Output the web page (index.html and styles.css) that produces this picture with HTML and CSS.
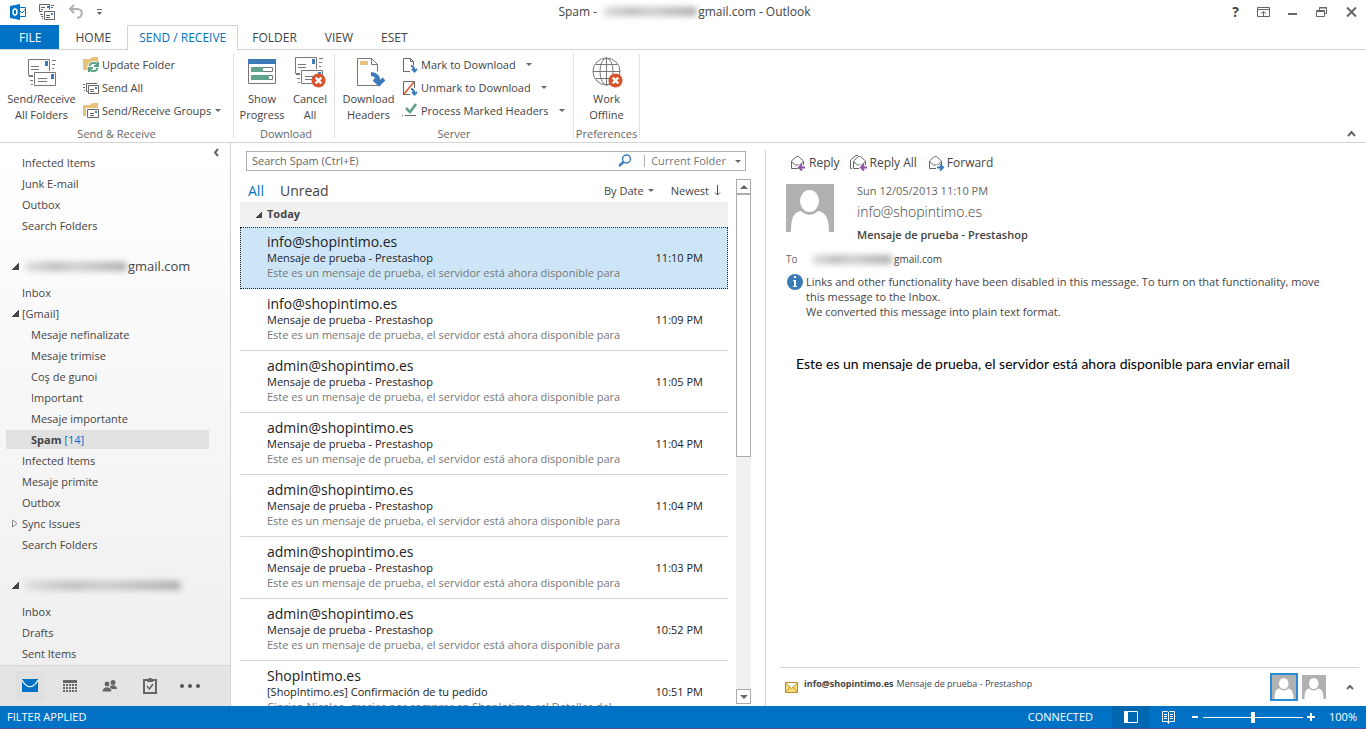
FILE: index.html
```html
<!DOCTYPE html>
<html lang="en">
<head>
    <meta charset="UTF-8">
    <meta name="viewport" content="width=device-width, initial-scale=1.0">
    <title>Spam - Outlook</title>
    <link rel="stylesheet" href="styles.css">
</head>
<body>

    <!-- Shared icons -->
    <svg class="sprite" aria-hidden="true">
        <symbol id="mails" viewBox="0 0 32 32">
            <path fill="#fff" stroke="#777" d="M2.5 3.500h21v16h-21z"/>
            <path stroke="#777" fill="none" d="M5 10.500h8M5 13.500h8M26 4.500h4M26 8.500h3M26 12.500h2"/>
            <path fill="#3d7ab8" d="M19 5h3v5h-3z"/>
            <path fill="#fff" stroke="#fff" stroke-width="3" d="M8.500 16.500h21v13h-21z"/>
            <path fill="#fff" stroke="#777" d="M8.500 16.500h21v13h-21z"/>
            <path stroke="#777" fill="none" d="M12 22.500h9M12 25.500h9M3 20.500h4M4 24.500h3M5 28.500h2"/>
            <path fill="#3d7ab8" d="M25 18h3v5h-3z"/>
        </symbol>
        <symbol id="person" viewBox="0 0 48 48">
            <path fill="#b1b1b1" d="M0 0h48v48H0z"/>
            <path fill="#fff" d="M5 48c0-13 2-20 10-21 5 5 12 5 17 0 8 1 11 8 11 21z"/>
            <ellipse cx="23.500" cy="17" rx="10.500" ry="12" fill="#b1b1b1"/>
            <ellipse cx="23.500" cy="17" rx="9.500" ry="11" fill="#fff"/>
        </symbol>
        <symbol id="cross" viewBox="0 0 16 16">
            <circle cx="8" cy="8" r="7.500" fill="#d9532c"/>
            <path stroke="#fff" stroke-width="2.500" d="M5 5l6 6M11 5l-6 6"/>
        </symbol>
        <symbol id="envelope" viewBox="0 0 18 16">
            <path fill="#fff" stroke="#666" d="M2.500 13.500V6l5-4.500h2l5 4.500v7.500zM2.500 6.500l4 3.500h4l4-3.500"/>
        </symbol>
    </svg>

    <!-- Title bar -->
    <header class="titlebar">
        <div class="quick-access">
            <svg class="icon" viewBox="0 0 16 16"><path fill="#fff" stroke="#0072c6" d="M8.500 3.500h7v9h-7z"/><path fill="none" stroke="#0072c6" d="M9 6l3 3 3.500-4"/><path fill="#0072c6" d="M0 2l10-2v16L0 14z"/><ellipse cx="5" cy="8" rx="2" ry="3" fill="none" stroke="#fff" stroke-width="1.500"/></svg>
            <button type="button" aria-label="Send/Receive All Folders"><svg class="icon" viewBox="0 0 16 16"><path fill="none" stroke="#666" d="M3.500 7.500H.5v-7h10v5M2 3.500h4M2 5.500h2M12 1.500h3M12 3.500h2M5.500 7.500h10v8h-10zM7 11.500h4M7 13.500h4M1 10.500h3M2 12.500h2M3 14.500h1"/><path fill="#3d7ab8" d="M8 2h2v2H8zM12 9h2v2h-2z"/></svg></button>
            <button type="button" aria-label="Undo"><svg class="icon" viewBox="0 0 16 16"><path fill="none" stroke="#b0b0b0" stroke-width="2" d="M2 5h7c7 0 6 8 0 9M6 1L2 5l4 4"/></svg></button>
            <button type="button" aria-label="Customize"><svg class="icon" viewBox="0 0 16 16"><path fill="#666" d="M0 5h5v1H0zM0 8h5l-2.500 3z"/></svg></button>
        </div>
        <div class="title">Spam - <span class="smudge smudge-title"></span>gmail.com - Outlook</div>
        <div class="window-buttons">
            <button type="button" class="help" aria-label="Help">?</button>
            <button type="button" aria-label="Ribbon display options"><svg class="icon" viewBox="0 0 16 16"><path fill="none" stroke="#666" d="M1.500 3.500h12v9h-12zM1 5.500h13M7.500 12V8M5 9.500l2.500-2 2.500 2"/></svg></button>
            <button type="button" aria-label="Minimize"><svg class="icon" viewBox="0 0 16 16"><path fill="#666" d="M3 9h9v2H3z"/></svg></button>
            <button type="button" aria-label="Restore"><svg class="icon" viewBox="0 0 16 16"><path fill="none" stroke="#666" d="M5.500 6V3.500h7v6H11M5 4h8M2.500 6.500h8v6h-8zM2 7.500h8"/></svg></button>
            <button type="button" aria-label="Close"><svg class="icon" viewBox="0 0 16 16"><path stroke="#666" stroke-width="2" d="M4 3.500l9 9M13 3.500l-9 9"/></svg></button>
        </div>
    </header>

    <!-- Ribbon tabs -->
    <nav class="tabs">
        <a href="#" class="tab file">FILE</a>
        <a href="#" class="tab home">HOME</a>
        <a href="#" class="tab active">SEND / RECEIVE</a>
        <a href="#" class="tab">FOLDER</a>
        <a href="#" class="tab">VIEW</a>
        <a href="#" class="tab">ESET</a>
    </nav>

    <!-- Ribbon -->
    <section class="ribbon">
        <div class="group group-send">
            <div class="group-body">
                <button type="button" class="big wide">
                    <svg class="big-icon" viewBox="0 0 32 32"><use href="#mails"/></svg>
                    <span>Send/Receive<br>All Folders</span>
                </button>
                <div class="stack">
                    <button type="button" class="small"><svg class="icon" viewBox="0 0 16 16"><path fill="#e8c27d" d="M0 2h7l2-2h6v6H0zM0 5h6v8H0z"/><circle cx="10.500" cy="10" r="6" fill="#fff"/><path fill="none" stroke="#5a9f86" stroke-width="2" d="M6.500 9c1-4 6-4 8-1M14.500 11c-1 4-6 4-8 1M15 5v4h-4M6 15v-4h4"/></svg>Update Folder</button>
                    <button type="button" class="small"><svg class="icon" viewBox="0 0 16 16"><path fill="none" stroke="#666" d="M5 11.500H3.500v-8H14M0 4.500h2M0 7.500h2M1 10.500h1M5.500 5.500h10v8h-10zM7 9.500h4M7 11.500h4"/><path fill="#3d7ab8" d="M12 7h2v2h-2z"/></svg>Send All</button>
                    <button type="button" class="small"><svg class="icon" viewBox="0 0 16 16"><path fill="#e8c27d" d="M0 2h7l2-2h6v5H3v8H0z"/><path fill="#fff" stroke="#666" d="M4.500 6.500h11v8h-11zM7 10.500h4M7 12.500h4"/><path fill="#3d7ab8" d="M12 8h2v2h-2z"/></svg>Send/Receive Groups<i class="caret near"></i></button>
                </div>
            </div>
            <div class="group-name">Send &amp; Receive</div>
        </div>
        <div class="group group-download">
            <div class="group-body">
                <button type="button" class="big">
                    <svg class="big-icon" viewBox="0 0 32 32"><path fill="#fff" stroke="#777" d="M2.500 4.500h27v23h-27z"/><path fill="#3d7ab8" d="M2 3h28v5H2z"/><path fill="#fff" stroke="#777" d="M5.500 11.500h21v4h-21zM5.500 19.500h21v4h-21z"/><path fill="#5fa38b" d="M5 11h12v5H5zM5 19h18v5H5z"/></svg>
                    <span>Show<br>Progress</span>
                </button>
                <button type="button" class="big">
                    <svg class="big-icon" viewBox="0 0 32 32"><use href="#mails" x="-1" y="-2" width="32" height="32"/><use href="#cross" x="17" y="17" width="15" height="15"/></svg>
                    <span>Cancel<br>All</span>
                </button>
            </div>
            <div class="group-name">Download</div>
        </div>
        <div class="group group-server">
            <div class="group-body">
                <button type="button" class="big headers">
                    <svg class="big-icon" viewBox="0 0 32 32"><path fill="#fff" stroke="#777" d="M4.500 2.500h14l6 6v21h-20zM18.500 2.500v6h6"/><path fill="#e8c27d" d="M7 5h8v4H7z"/><path fill="none" stroke="#fff" stroke-width="6" d="M18 17q8 0 8 10"/><path fill="none" stroke="#3d7ab8" stroke-width="4" d="M18 18q7 0 8 9M21 23l5 5 5-5"/></svg>
                    <span>Download<br>Headers</span>
                </button>
                <div class="stack">
                    <button type="button" class="small"><svg class="icon" viewBox="0 0 16 16"><path fill="none" stroke="#666" d="M8 14.500H1.500v-13h7l3 3V8M8.500 1.500v3h3"/><path fill="none" stroke="#3d7ab8" stroke-width="2" d="M9 9q3 0 3.500 5M10 12l2.500 2.500L15 12"/></svg>Mark to Download<i class="caret"></i></button>
                    <button type="button" class="small"><svg class="icon" viewBox="0 0 16 16"><path fill="none" stroke="#666" d="M8 14.500H1.500v-13h11V8"/><path stroke="#d9532c" stroke-width="1.500" d="M2 14L12 2"/><path fill="none" stroke="#3d7ab8" stroke-width="2" d="M9 9q3 0 3.500 5M10 12l2.500 2.500L15 12"/></svg>Unmark to Download<i class="caret"></i></button>
                    <button type="button" class="small"><svg class="icon" viewBox="0 0 16 16"><path fill="none" stroke="#5a9f86" stroke-width="2.500" d="M4 5l4 4 6-8"/><path fill="#666" d="M0 12h1v1H0zM3 12h11v1H3z"/></svg>Process Marked Headers<i class="caret"></i></button>
                </div>
            </div>
            <div class="group-name">Server</div>
        </div>
        <div class="group group-preferences">
            <div class="group-body">
                <button type="button" class="big">
                    <svg class="big-icon" viewBox="0 0 32 32"><g fill="none" stroke="#777"><circle cx="15.500" cy="15.500" r="13.500"/><ellipse cx="15.500" cy="15.500" rx="6.500" ry="13.500"/><path d="M15.500 2v27M2 15.500h27M5 8.500h21M5 22.500h21"/></g><use href="#cross" x="17" y="17" width="15" height="15"/></svg>
                    <span>Work<br>Offline</span>
                </button>
            </div>
            <div class="group-name">Preferences</div>
        </div>
        <button type="button" class="collapse" aria-label="Collapse the ribbon"><svg class="icon" viewBox="0 0 16 16"><path fill="none" stroke="#666" stroke-width="2" d="M5 14l3.500-4 3.500 4"/></svg></button>
    </section>

    <main class="main">
        <!-- Folder pane -->
        <aside class="folders">
            <button type="button" class="minimize" aria-label="Minimize the folder pane"><svg class="icon" viewBox="0 0 16 16"><path fill="none" stroke="#666" stroke-width="2" d="M10 4L7 7.500l3 3.500"/></svg></button>
            <ul class="folder-list">
                <li><a href="#">Infected Items</a></li>
                <li><a href="#">Junk E-mail</a></li>
                <li><a href="#">Outbox</a></li>
                <li><a href="#">Search Folders</a></li>
                <li class="account"><i class="open"></i><span class="smudge smudge-account"></span>gmail.com</li>
                <li><a href="#">Inbox</a></li>
                <li><i class="open"></i><a href="#">[Gmail]</a></li>
                <li class="sub"><a href="#">Mesaje nefinalizate</a></li>
                <li class="sub"><a href="#">Mesaje trimise</a></li>
                <li class="sub"><a href="#">Coş de gunoi</a></li>
                <li class="sub"><a href="#">Important</a></li>
                <li class="sub"><a href="#">Mesaje importante</a></li>
                <li class="sub current"><a href="#"><b>Spam</b> <span>[14]</span></a></li>
                <li><a href="#">Infected Items</a></li>
                <li><a href="#">Mesaje primite</a></li>
                <li><a href="#">Outbox</a></li>
                <li><svg class="closed" viewBox="0 0 6 9"><path fill="#fff" stroke="#888" d="M.5 1v7L5 4.500z"/></svg><a href="#">Sync Issues</a></li>
                <li><a href="#">Search Folders</a></li>
                <li class="account"><i class="open"></i><span class="smudge smudge-long"></span></li>
                <li><a href="#">Inbox</a></li>
                <li><a href="#">Drafts</a></li>
                <li><a href="#">Sent Items</a></li>
            </ul>
            <nav class="modules">
                <button type="button" class="selected" aria-label="Mail"><svg class="icon" viewBox="0 0 16 16"><path fill="#0072c6" d="M0 1h16v13H0z"/><path fill="none" stroke="#fff" stroke-width="1.200" d="M0 2c5 9 11 9 16 0"/></svg></button>
                <button type="button" aria-label="Calendar"><svg class="icon" viewBox="0 0 16 16"><path fill="#666" d="M1 2h14v3H1z"/><path fill="none" stroke="#666" stroke-width="2" stroke-dasharray="2 1" d="M1 7h14M1 10h14M1 13h14"/></svg></button>
                <button type="button" aria-label="People"><svg class="icon" viewBox="0 0 16 16"><g fill="#666"><circle cx="11" cy="4.500" r="2.500"/><path d="M7 11c0-5 8-5 8 0z"/><g stroke="#e4e4e4"><circle cx="5" cy="6" r="3"/><path d="M0 14c0-7 10-7 10 0z"/></g></g></svg></button>
                <button type="button" aria-label="Tasks"><svg class="icon" viewBox="0 0 16 16"><path fill="none" stroke="#666" stroke-width="2" d="M5 2H2v13h12V2h-3"/><path fill="#666" d="M5 1h1l1-1h2l1 1h1v3H5z"/><path fill="none" stroke="#666" stroke-width="1.500" d="M5 8l2.500 3L11 6"/></svg></button>
                <button type="button" aria-label="More"><svg class="dots" viewBox="0 0 22 16"><g fill="#555"><circle cx="3" cy="8" r="2"/><circle cx="11" cy="8" r="2"/><circle cx="19" cy="8" r="2"/></g></svg></button>
            </nav>
        </aside>

        <!-- Message list -->
        <section class="messages">
            <div class="search">
                <input type="text" placeholder="Search Spam (Ctrl+E)" aria-label="Search Spam">
                <svg class="icon" viewBox="0 0 16 16"><circle cx="9.500" cy="6" r="4" fill="none" stroke="#3d7ab8" stroke-width="1.500"/><path stroke="#3d7ab8" stroke-width="2.500" d="M6.500 9L2 13"/></svg>
                <button type="button" class="scope">Current Folder<i class="caret"></i></button>
            </div>
            <div class="list-area">
                <div class="list">
                    <div class="filters">
                        <button type="button" class="filter chosen">All</button>
                        <button type="button" class="filter">Unread</button>
                        <button type="button" class="sort">By Date<i class="caret near"></i></button>
                        <button type="button" class="sort">Newest<svg class="arrow" viewBox="0 0 7 12"><path fill="none" stroke="#555" d="M3.500 0v10M1 7.500L3.500 10 6 7.500"/></svg></button>
                    </div>
                    <div class="day"><i class="open"></i>Today</div>
                    <article class="message selected"><h2>info@shopintimo.es</h2><p class="subject">Mensaje de prueba - Prestashop<time>11:10 PM</time></p><p class="preview">Este es un mensaje de prueba, el servidor está ahora disponible para</p></article>
                    <article class="message"><h2>info@shopintimo.es</h2><p class="subject">Mensaje de prueba - Prestashop<time>11:09 PM</time></p><p class="preview">Este es un mensaje de prueba, el servidor está ahora disponible para</p></article>
                    <article class="message"><h2>admin@shopintimo.es</h2><p class="subject">Mensaje de prueba - Prestashop<time>11:05 PM</time></p><p class="preview">Este es un mensaje de prueba, el servidor está ahora disponible para</p></article>
                    <article class="message"><h2>admin@shopintimo.es</h2><p class="subject">Mensaje de prueba - Prestashop<time>11:04 PM</time></p><p class="preview">Este es un mensaje de prueba, el servidor está ahora disponible para</p></article>
                    <article class="message"><h2>admin@shopintimo.es</h2><p class="subject">Mensaje de prueba - Prestashop<time>11:04 PM</time></p><p class="preview">Este es un mensaje de prueba, el servidor está ahora disponible para</p></article>
                    <article class="message"><h2>admin@shopintimo.es</h2><p class="subject">Mensaje de prueba - Prestashop<time>11:03 PM</time></p><p class="preview">Este es un mensaje de prueba, el servidor está ahora disponible para</p></article>
                    <article class="message"><h2>admin@shopintimo.es</h2><p class="subject">Mensaje de prueba - Prestashop<time>10:52 PM</time></p><p class="preview">Este es un mensaje de prueba, el servidor está ahora disponible para</p></article>
                    <article class="message"><h2>ShopIntimo.es</h2><p class="subject">[ShopIntimo.es] Confirmación de tu pedido<time>10:51 PM</time></p><p class="preview">Ciprian Nicolae, gracias por comprar en ShopIntimo.es! Detalles del</p></article>
                </div>
                <div class="scrollbar">
                    <button type="button" aria-label="Scroll up"><i class="caret up"></i></button>
                    <div class="thumb"></div>
                    <button type="button" aria-label="Scroll down"><i class="caret"></i></button>
                </div>
            </div>
        </section>

        <!-- Reading pane -->
        <section class="reading">
            <div class="actions">
                <button type="button"><svg class="action-icon" viewBox="0 0 18 16"><use href="#envelope" width="18" height="16"/><path fill="#fff" d="M9 10h8v6H9z"/><path fill="none" stroke="#8c4fa8" stroke-width="2" d="M16 12.500h-5M13 9.500l-3 3 3 3"/></svg>Reply</button>
                <button type="button"><svg class="action-icon" viewBox="0 0 18 16"><path fill="none" stroke="#666" d="M2 13.500H.5V5L6 .5h2"/><use href="#envelope" x="1" width="18" height="16"/><path fill="#fff" d="M9 10h9v6H9z"/><path fill="none" stroke="#8c4fa8" stroke-width="2" d="M17 12.500h-5M14 9.500l-3 3 3 3"/></svg>Reply All</button>
                <button type="button"><svg class="action-icon" viewBox="0 0 18 16"><use href="#envelope" width="18" height="16"/><path fill="#fff" d="M9 10h8v6H9z"/><path fill="none" stroke="#3d7ab8" stroke-width="2" d="M10 12.500h5M13 9.500l3 3-3 3"/></svg>Forward</button>
            </div>
            <div class="sender">
                <svg class="photo" viewBox="0 0 48 48"><use href="#person"/></svg>
                <div>
                    <p class="date">Sun 12/05/2013 11:10 PM</p>
                    <p class="from">info@shopintimo.es</p>
                    <h1>Mensaje de prueba - Prestashop</h1>
                </div>
            </div>
            <div class="to"><span class="to-label">To</span><span class="smudge smudge-to"></span>gmail.com</div>
            <div class="notice">
                <svg class="icon" viewBox="0 0 16 16"><circle cx="8" cy="8" r="8" fill="#3d7ab8"/><path fill="#fff" d="M7 2h2v2H7zM6 6h3v6h1v1H6v-1h1V7H6z"/></svg>
                <div>
                    <p>Links and other functionality have been disabled in this message. To turn on that functionality, move this message to the Inbox.</p>
                    <p>We converted this message into plain text format.</p>
                </div>
            </div>
            <p class="mail-text">Este es un mensaje de prueba, el servidor está ahora disponible para enviar email</p>
            <footer class="people">
                <svg class="mail-icon" viewBox="0 0 13 11"><path fill="#f7dd7a" stroke="#b98f2c" d="M.5.5h12v10H.5zM.5 1l6 5.500 6-5.500M.5 10L5 5.500M12.500 10L8 5.500"/></svg>
                <b>info@shopintimo.es</b>
                <span>Mensaje de prueba - Prestashop</span>
                <svg class="thumbnail framed" viewBox="0 0 48 48"><use href="#person"/></svg>
                <svg class="thumbnail" viewBox="0 0 48 48"><use href="#person"/></svg>
                <button type="button" aria-label="Expand the people pane"><svg class="icon" viewBox="0 0 16 16"><path fill="none" stroke="#666" stroke-width="2" d="M5 10l3-3 3 3"/></svg></button>
            </footer>
        </section>
    </main>

    <!-- Status bar -->
    <footer class="statusbar">
        <span class="filter-note">FILTER APPLIED</span>
        <span>CONNECTED</span>
        <button type="button" class="view pressed" aria-label="Normal view"><svg class="icon" viewBox="0 0 16 16"><path fill="none" stroke="#fff" d="M1.500 2.500h13v11h-13z"/><path fill="#fff" d="M1 2h4v12H1z"/></svg></button>
        <button type="button" class="view" aria-label="Reading view"><svg class="icon" viewBox="0 0 16 16"><path fill="none" stroke="#fff" d="M2.500 2.500h5l1 1 1-1h5v10h-5l-1 2-1-2h-5zM8.500 3v11M4 5.500h3M4 7.500h3M4 9.500h3M10 5.500h3M10 7.500h3M10 9.500h3"/></svg></button>
        <button type="button" class="zoom-step" aria-label="Zoom out"><svg viewBox="0 0 8 8"><path fill="#fff" d="M1 3h6v2H1z"/></svg></button>
        <input type="range" class="zoom" min="0" max="100" value="50" aria-label="Zoom">
        <button type="button" class="zoom-step" aria-label="Zoom in"><svg viewBox="0 0 8 8"><path fill="#fff" d="M0 3h8v2H0zM3 0h2v8H3z"/></svg></button>
        <span class="percent">100%</span>
    </footer>

</body>
</html>
```
FILE: styles.css
```css
/* Basic Styles */
* {
    box-sizing: border-box;
}

html, body {
    height: 100%;
    margin: 0;
}

body {
    display: flex;
    flex-direction: column;
    overflow: hidden;
    background-color: #fff;
    color: #444;
    font-family: "Open Sans", "Noto Sans", sans-serif;
    font-size: 11px;
    line-height: 16px;
}

button {
    display: flex;
    align-items: center;
    margin: 0;
    padding: 0;
    border: none;
    background: none;
    color: inherit;
    font: inherit;
    white-space: nowrap;
}

a {
    color: inherit;
    text-decoration: none;
}

h1, h2, p, ul {
    margin: 0;
    padding: 0;
}

svg {
    display: block;
    flex: none;
}

.sprite {
    position: absolute;
    width: 0;
    height: 0;
}

.icon {
    width: 16px;
    height: 16px;
}

/* Small triangles */
.caret {
    flex: none;
    margin-left: 9px;
    border: 3px solid transparent;
    border-top-color: #666;
    border-bottom: none;
}

.caret.near {
    margin-left: 4px;
}

.caret.up {
    border-top: none;
    border-bottom: 3px solid #666;
}

.open {
    flex: none;
    width: 7px;
    height: 7px;
    margin-right: 3px;
    background: linear-gradient(135deg, transparent 50%, #444 50%);
}

.closed {
    width: 6px;
    height: 9px;
    margin-right: 4px;
}

/* Hidden part of an address */
.smudge {
    display: inline-block;
    flex: none;
    height: 9px;
    border-radius: 4px;
    background: linear-gradient(90deg, #ddd, #bbb 30%, #ccc 50%, #bbb 75%, #aaa);
    filter: blur(3px);
}

.smudge-title {
    width: 94px;
    margin: 0 1px 0 3px;
}

.smudge-account {
    width: 102px;
    margin: 0 1px 0 3px;
}

.smudge-long {
    width: 156px;
    margin: 0 3px;
}

.smudge-to {
    width: 80px;
    margin-right: 2px;
}

/* Title bar */
.titlebar {
    display: grid;
    grid-template-columns: 1fr auto 1fr;
    align-items: center;
    height: 25px;
    flex: none;
    padding: 0 7px 2px 10px;
}

.quick-access, .window-buttons {
    display: flex;
    gap: 13px;
}

.window-buttons {
    justify-content: flex-end;
}

.help {
    padding: 0 4px;
    font-size: 14px;
    font-weight: bold;
}

.title {
    font-size: 12px;
    white-space: nowrap;
}

/* Ribbon tabs */
.tabs {
    display: flex;
    flex: none;
    height: 25px;
    border-bottom: 1px solid #d4d4d4;
    font-size: 12px;
}

.tab {
    padding: 5px 14px 0;
}

.tab.file {
    padding: 5px 18px 0 19px;
    background-color: #0072c6;
    color: #fff;
}

.tab.home {
    padding: 5px 16px 0;
}

.tab.active {
    height: 25px;
    padding: 4px 11px 0;
    border: 1px solid #d4d4d4;
    border-bottom: none;
    background-color: #fff;
    color: #0072c6;
}

/* Ribbon */
.ribbon {
    display: flex;
    flex: none;
    height: 93px;
    padding: 4px 0;
    border-bottom: 1px solid #d4d4d4;
}

.group {
    display: flex;
    flex-direction: column;
    border-right: 1px solid #e1e1e1;
}

.group-send {
    width: 234px;
}

.group-download {
    width: 101px;
    padding-left: 4px;
}

.group-server {
    width: 239px;
}

.group-preferences {
    width: 66px;
}

.group-body {
    display: flex;
    flex: none;
    height: 74px;
}

.group-name {
    color: #666;
    line-height: 12px;
    text-align: center;
}

.big {
    flex-direction: column;
    flex: 1;
    padding-top: 2px;
}

.big.wide {
    flex: 0 0 83px;
}

.big.headers {
    flex: 0 0 67px;
}

.big-icon {
    width: 32px;
    height: 32px;
    margin-bottom: 3px;
}

.stack {
    display: flex;
    flex-direction: column;
}

.small {
    height: 23px;
    padding-bottom: 2px;
    gap: 3px;
}

.small .caret {
    margin-left: 7px;
}

.small .caret.near {
    margin-left: 1px;
}

.collapse {
    align-self: flex-end;
    margin: 0 7px 0 auto;
}

/* Main area */
.main {
    display: flex;
    flex: 1;
    min-height: 0;
}

/* Folder pane */
.folders {
    display: flex;
    flex-direction: column;
    flex: 0 0 231px;
    border-right: 1px solid #d4d4d4;
    background: linear-gradient(#fff, #eee);
}

.minimize {
    position: absolute;
    align-self: flex-end;
    margin: 2px 6px 0 0;
}

.folder-list {
    flex: 1;
    min-height: 0;
    padding-top: 9px;
    overflow: hidden;
    list-style: none;
}

.folder-list li {
    display: flex;
    align-items: center;
    height: 21px;
    margin: 0 21px 0 6px;
    padding-left: 16px;
}

.folder-list li.sub {
    padding-left: 25px;
}

.folder-list li.account {
    height: 46px;
    padding-top: 14px;
    font-size: 13px;
}

.folder-list .open, .folder-list .closed {
    margin-left: -10px;
}

.folder-list .current {
    height: 19px;
    margin-top: 1px;
    margin-bottom: 1px;
    background-color: #e1e1e1;
}

.current span {
    color: #0072c6;
}

.modules {
    display: flex;
    align-items: center;
    flex: none;
    height: 41px;
    padding-left: 15px;
    gap: 10px;
    border-top: 1px solid #d4d4d4;
    background-color: #e4e4e4;
}

.modules button {
    justify-content: center;
    width: 30px;
    height: 30px;
}

.modules .selected {
    background-color: #e0e0e0;
}

.dots {
    width: 22px;
    height: 16px;
}

/* Message list */
.messages {
    display: flex;
    flex-direction: column;
    flex: 0 0 534px;
    padding: 8px 14px 0 9px;
}

.search {
    display: flex;
    align-items: center;
    flex: none;
    height: 20px;
    margin: 0 5px 0 6px;
    border: 1px solid #abb0b8;
}

.search input {
    flex: 1;
    min-width: 0;
    padding: 0 5px;
    border: none;
    outline: none;
    background: none;
    color: #666;
    font: inherit;
}

.search input::placeholder {
    color: #666;
}

.scope {
    height: 12px;
    margin-left: 11px;
    padding: 0 4px 0 6px;
    border-left: 1px solid #abb0b8;
    color: #777;
}

.list-area {
    display: flex;
    flex: 1;
    min-height: 0;
    gap: 8px;
}

.list {
    flex: 1;
    overflow: hidden;
}

.filters {
    display: flex;
    align-items: center;
    height: 31px;
    padding: 8px 7px 0 8px;
}

.filter {
    margin-right: 16px;
    font-size: 14px;
}

.chosen {
    color: #0072c6;
}

.sort {
    margin-left: 17px;
}

.filter + .sort {
    margin-left: auto;
}

.arrow {
    width: 7px;
    height: 12px;
    margin-left: 5px;
}

.day {
    display: flex;
    align-items: center;
    height: 24px;
    margin-bottom: 1px;
    padding-left: 15px;
    background-color: #f0f0f0;
    font-weight: bold;
}

.day .open {
    margin-right: 5px;
}

.message {
    height: 62px;
    padding: 5px 24px 0 26px;
    border: 1px solid transparent;
    border-bottom-color: #d4d4d4;
    color: #222;
}

.message.selected {
    border: 1px dotted #222;
    background-color: #cde6f7;
}

.message h2 {
    font-size: 14px;
    font-weight: normal;
    line-height: 17px;
}

.subject {
    display: flex;
    justify-content: space-between;
}

.preview {
    color: #777;
    line-height: 14px;
}

/* Scrollbar */
.scrollbar {
    display: flex;
    flex-direction: column;
    flex: 0 0 15px;
    margin: 8px 0 2px;
    background-color: #f1f1f1;
}

.scrollbar button {
    justify-content: center;
    height: 15px;
    border: 1px solid #ababab;
    background-color: #fff;
}

.scrollbar .caret {
    margin: 0;
    border-width: 4px;
    border-bottom-width: 0;
}

.scrollbar .caret.up {
    border-top-width: 0;
    border-bottom-width: 4px;
}

.scrollbar button:last-child {
    margin-top: auto;
}

.thumb {
    height: 50%;
    border: 1px solid #ababab;
    background-color: #fff;
}

/* Reading pane */
.reading {
    display: flex;
    flex-direction: column;
    flex: 1;
    min-width: 0;
    margin-top: 7px;
    padding: 4px 7px 0 13px;
    border-left: 1px solid #d4d4d4;
}

.actions {
    display: flex;
    gap: 10px;
    padding: 1px 10px;
    font-size: 12px;
}

.actions button {
    gap: 2px;
}

.action-icon {
    width: 18px;
    height: 16px;
}

.sender {
    display: flex;
    gap: 23px;
    margin-top: 12px;
    padding-left: 7px;
}

.photo {
    width: 48px;
    height: 48px;
}

.date {
    color: #666;
    line-height: 14px;
}

.from {
    margin: 4px 0;
    color: #444;
    font-size: 14px;
    font-weight: 300;
    line-height: 20px;
}

.reading h1 {
    font-size: 11px;
    font-weight: 600;
    line-height: 18px;
}

.to {
    display: flex;
    align-items: center;
    margin-top: 7px;
    padding-left: 7px;
    font-size: 10px;
}

.to-label {
    width: 26px;
    color: #666;
}

.notice {
    display: flex;
    gap: 3px;
    margin-top: 7px;
    padding: 0 20px 0 8px;
    line-height: 15px;
}

.mail-text {
    margin-top: 37px;
    padding-left: 17px;
    color: #000;
    font-family: Lato, "Open Sans", sans-serif;
    font-size: 14px;
}

.people {
    display: flex;
    align-items: center;
    height: 39px;
    margin-top: auto;
    padding-left: 6px;
    border-top: 1px solid #d4d4d4;
    font-size: 9px;
}

.people b, .people span {
    padding-bottom: 6px;
}

.mail-icon {
    width: 13px;
    height: 11px;
    margin-right: 6px;
}

.people span {
    margin: 0 auto 0 3px;
}

.thumbnail {
    width: 24px;
    height: 24px;
    margin-right: 16px;
}

.thumbnail.framed {
    width: 28px;
    height: 28px;
    margin-right: 4px;
    border: 2px solid #2a8dd4;
}

.people button {
    width: 17px;
}

/* Status bar */
.statusbar {
    display: flex;
    align-items: center;
    flex: none;
    height: 23px;
    padding: 0 9px 0 7px;
    border-bottom: 1px solid #4a4a9c;
    background-color: #0072c6;
    color: #fff;
}

.filter-note {
    margin-right: auto;
}

.view {
    justify-content: center;
    width: 37px;
    height: 22px;
}

.view.pressed {
    margin-left: 19px;
    background-color: #0067b0;
}

.zoom-step svg {
    width: 8px;
    height: 8px;
}

.view + .zoom-step {
    margin-left: 5px;
}

.zoom {
    width: 100px;
    height: 12px;
    margin: 0 4px;
    background: linear-gradient(#fff, #fff) center / 100% 1px no-repeat;
    -webkit-appearance: none;
    appearance: none;
}

.zoom::-webkit-slider-thumb {
    width: 4px;
    height: 11px;
    background-color: #fff;
    -webkit-appearance: none;
    appearance: none;
}

.percent {
    margin-left: 14px;
}
```
